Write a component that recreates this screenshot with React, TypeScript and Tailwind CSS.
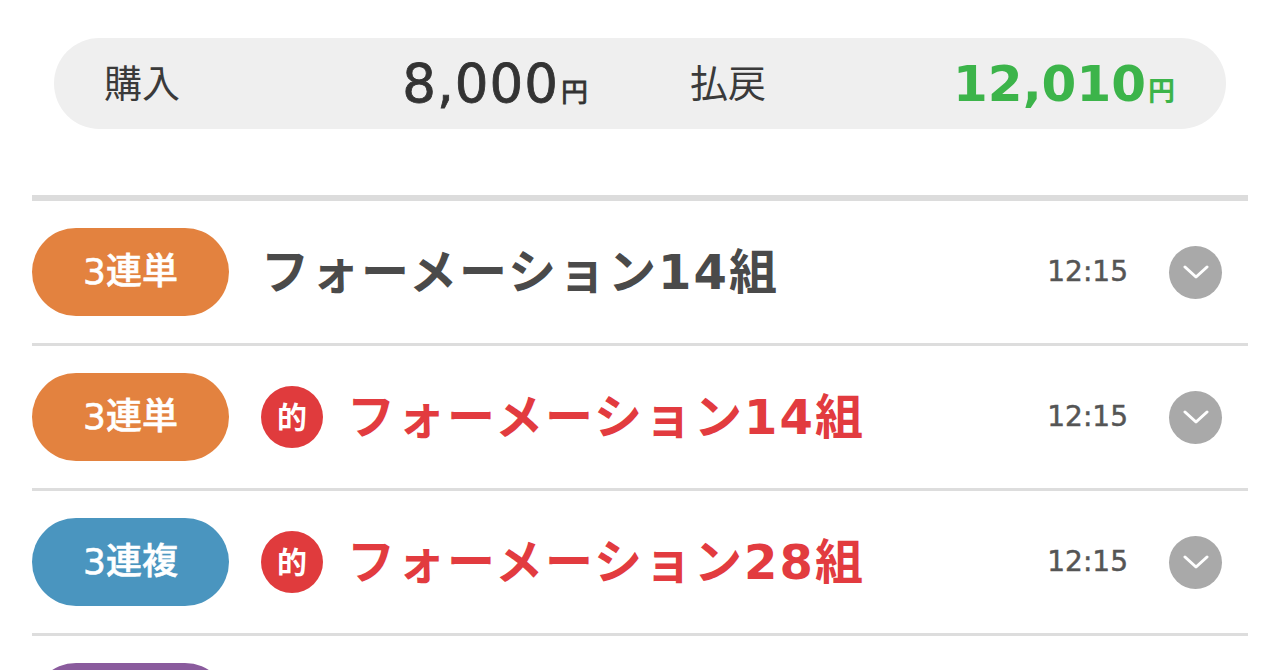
const FONT = "font-['DejaVu_Sans','Noto_Sans_CJK_JP',sans-serif]";

type Bet = {
  kind: string;
  color: string;
  hit: boolean;
  title: string;
  time: string;
};

const BETS: Bet[] = [
  { kind: "3連単", color: "bg-[#e3823f]", hit: false, title: "フォーメーション14組", time: "12:15" },
  { kind: "3連単", color: "bg-[#e3823f]", hit: true, title: "フォーメーション14組", time: "12:15" },
  { kind: "3連複", color: "bg-[#4a95bf]", hit: true, title: "フォーメーション28組", time: "12:15" },
  { kind: "2連単", color: "bg-[#8a5b9d]", hit: false, title: "フォーメーション6組", time: "12:15" },
];

const Chevron = () => (
  <div className="w-[53px] h-[53px] rounded-full bg-[#a9a9a9] flex items-center justify-center shrink-0">
    <svg width="26" height="16" viewBox="0 0 26 16" fill="none">
      <path d="M2 3 L13 13 L24 3" stroke="white" strokeWidth="3" strokeLinecap="round" strokeLinejoin="round" />
    </svg>
  </div>
);

const Amount = ({ value, className }: { value: string; className: string }) => (
  <div className={`flex items-baseline ${className}`}>
    <span className="leading-none">{value}</span>
    <span className="text-[27px] leading-none ml-[2px] tracking-normal">円</span>
  </div>
);

export default function App() {
  return (
    <div className={`${FONT} bg-white w-[1280px] h-[670px] overflow-hidden`}>
      {/* 購入・払戻 */}
      <div className="pt-[38px] px-[54px]">
        <div className="h-[91px] rounded-full bg-[#efefef] grid grid-cols-2">
          <div className="flex items-center justify-between pl-[50px] pr-[52px]">
            <span className="text-[38px] text-[#3a3a3a] leading-none">購入</span>
            <Amount value="8,000" className="text-[#333333] text-[53px] tracking-[1px] [-webkit-text-stroke:0.8px_#333333]" />
          </div>
          <div className="flex items-center justify-between pl-[50px] pr-[51px]">
            <span className="text-[38px] text-[#3a3a3a] leading-none">払戻</span>
            <Amount value="12,010" className="text-[#3cb44a] text-[50px] font-bold" />
          </div>
        </div>
      </div>

      {/* 買い目リスト */}
      <div className="mt-[66px] mx-[32px] border-t-[6px] border-[#dcdcdc]">
        {BETS.map((b, i) => (
          <div key={i} className="h-[145px] border-b-[3px] border-[#dddddd] flex items-center">
            <div
              className={`${b.color} w-[197px] h-[88px] rounded-full flex items-center justify-center text-white text-[36px] font-medium [-webkit-text-stroke:0.6px_white] shrink-0`}
            >
              {b.kind}
            </div>
            <div className="flex items-center ml-[32px] flex-1 min-w-0">
              {b.hit && (
                <div className="w-[62px] h-[62px] rounded-full bg-[#e03b3d] text-white text-[30px] font-bold flex items-center justify-center mr-[24px] shrink-0">
                  的
                </div>
              )}
              <span
                className={`text-[48px] font-bold leading-none whitespace-nowrap tracking-[2px] ${b.hit ? "text-[#e23b3f]" : "text-[#4a4a4a]"}`}
              >
                {b.title}
              </span>
            </div>
            <span className="text-[28px] text-[#555555] [-webkit-text-stroke:0.5px_#555555] mr-[41px]">{b.time}</span>
            <div className="mr-[26px]">
              <Chevron />
            </div>
          </div>
        ))}
      </div>
    </div>
  );
}
